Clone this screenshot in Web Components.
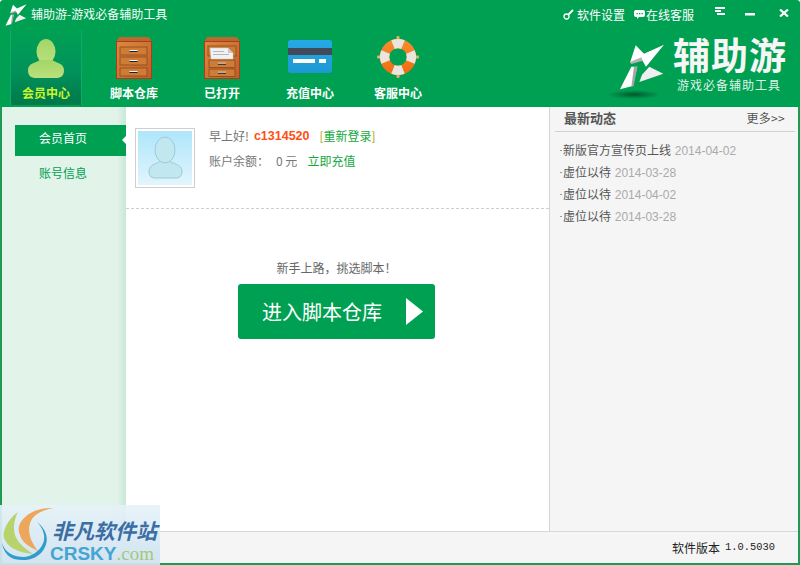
<!DOCTYPE html>
<html lang="zh"><head><meta charset="utf-8"><title>辅助游</title>
<style>
html,body{margin:0;padding:0;width:800px;height:565px;overflow:hidden;background:#fff}
body{font-family:"Noto Sans CJK SC","Liberation Sans",sans-serif;font-size:12px}
</style></head><body>
<app-window>
  <app-header slot="header">
    <nav-tab active label="会员中心" icon="user" top="9"></nav-tab>
    <nav-tab label="脚本仓库" icon="drawer" top="7"></nav-tab>
    <nav-tab label="已打开" icon="open" top="7"></nav-tab>
    <nav-tab label="充值中心" icon="card" top="10"></nav-tab>
    <nav-tab label="客服中心" icon="ring" top="6"></nav-tab>
  </app-header>
  <side-menu slot="side">
    <menu-item active>会员首页</menu-item>
    <menu-item>账号信息</menu-item>
  </side-menu>
  <member-pane slot="main"></member-pane>
  <news-panel slot="news">
    <news-row date="2014-04-02">新版官方宣传页上线</news-row>
    <news-row date="2014-03-28">虚位以待</news-row>
    <news-row date="2014-04-02">虚位以待</news-row>
    <news-row date="2014-03-28">虚位以待</news-row>
  </news-panel>
  <status-bar slot="status"></status-bar>
</app-window>
<site-stamp></site-stamp>
<script>
const LOGO = (w,h)=>`<svg width="${w}" height="${h}" viewBox="26 16 136 138"><path d="M75 20 L100 45 L160 18 L106 84 L92 60 L58 72Z" fill="#fff"/><path d="M58 70 L92 56 L96 66 L62 76Z" fill="#b5b5b5"/><path d="M62 84 L80 84 L66 142 L28 152Z" fill="#fff"/><path d="M70 84 L80 84 L69 142 L62 144Z" fill="#a5a5a5"/><path d="M116 84 L158 105 L86 130 L94 108Z" fill="#efefef"/></svg>`;
const cab = inner=>`<svg width="36" height="42" viewBox="0 0 36 42"><defs><linearGradient id="w" x1="0" y1="0" x2="1" y2="1"><stop offset="0" stop-color="#dc8a3e"/><stop offset="1" stop-color="#bb5f28"/></linearGradient></defs><path d="M3 0 H33 L36 5 H0Z" fill="#b9682f"/><rect x=".5" y="4.500" width="35" height="37" fill="url(#w)" stroke="#b23a1c"/>${inner}</svg>`;
const dr = (x,y,w,h)=>`<rect x="${x}" y="${y}" width="${w}" height="${h}" fill="#cf7c36" stroke="#8a4a1e" stroke-width=".8"/><rect x="${x+w/2-4}" y="${y+h/2-1}" width="8" height="1" fill="#f5f5f5"/><rect x="${x+w/2-4}" y="${y+h/2}" width="8" height="1" fill="#222"/>`;
const ICONS = {
 user:`<svg width="36" height="39" viewBox="0 0 36 39"><defs><linearGradient id="u" x1="0" y1="0" x2="0" y2="1"><stop offset="0" stop-color="#a2d668"/><stop offset="1" stop-color="#bbe07c"/></linearGradient></defs><ellipse cx="18" cy="12.500" rx="9.500" ry="12.500" fill="url(#u)"/><path d="M0 31 C0 24 8 24 12 21 L24 21 C28 24 36 24 36 31 C36 37 33 39 28 39 L8 39 C3 39 0 37 0 31Z" fill="url(#u)"/></svg>`,
 drawer:cab(dr(4,10,27,8)+dr(4,20,27,8)+dr(4,31,27,8)),
 open:cab(`<rect x="4" y="9" width="28" height="10" fill="#cf7c36" stroke="#8a4a1e" stroke-width=".8"/>`+dr(5,23,26,7.500)+dr(5,32,26,7.500)+`<path d="M6 11 H24 L29 16 V22 H7Z" fill="#f1f1f1" stroke="#c9c9c9" stroke-width=".5"/><path d="M24 11 L29 16 H24Z" fill="#c8c8c8"/><g fill="#aaa"><rect x="9" y="14" width="11" height=".8"/><rect x="9" y="17" width="16" height=".8"/></g>`),
 card:`<svg width="44" height="33" viewBox="0 0 44 33"><defs><linearGradient id="c" x1="0" y1="0" x2="0" y2="1"><stop offset="0" stop-color="#25a9e6"/><stop offset="1" stop-color="#1e98d2"/></linearGradient></defs><rect width="44" height="33" rx="3" fill="url(#c)"/><rect y="8" width="44" height="7" fill="#404a58"/><rect x="5" y="19" width="22" height="4" fill="#fff"/><rect x="31" y="19" width="7" height="4" fill="#fff"/></svg>`,
 ring:`<svg width="42" height="42" viewBox="0 0 42 42"><defs><linearGradient id="o" x1="0" y1="0" x2="0" y2="1"><stop offset="0" stop-color="#f88a2c"/><stop offset="1" stop-color="#ef6f14"/></linearGradient></defs><g fill="#e6b25f"><rect x="19.500" y="0" width="3" height="4" rx="1"/><rect x="19.500" y="38" width="3" height="4" rx="1"/><rect x="0" y="19.500" width="4" height="3" rx="1"/><rect x="38" y="19.500" width="4" height="3" rx="1"/></g><circle cx="21" cy="21" r="13.400" fill="none" stroke="url(#o)" stroke-width="9.300"/><g fill="none" stroke="#ebe5dd" stroke-width="9.300"><path d="M16 8.570 A13.400 13.400 0 0 1 26 8.570"/><path d="M16 33.430 A13.400 13.400 0 0 0 26 33.430"/><path d="M8.570 16 A13.400 13.400 0 0 0 8.570 26"/><path d="M33.430 16 A13.400 13.400 0 0 1 33.430 26"/></g></svg>`
};
function def(name, css, html){
  customElements.define(name, class extends HTMLElement{
    connectedCallback(){
      if(this.shadowRoot) return;
      const r=this.attachShadow({mode:"open"});
      r.innerHTML=`<style>${css}</style>`+(typeof html==="function"?html(this):html);
    }
  });
}
def("app-window",`
 :host{display:flex;flex-direction:column;width:800px;height:565px;box-sizing:border-box;border:solid #1f9a55;border-width:0 2px 2px 2px;border-radius:4px 4px 0 0;background:#fff}
 .body{flex:1;display:flex;min-height:0}
 ::slotted([slot=news]){flex:1}
`,`<slot name="header"></slot><div class="body"><slot name="side"></slot><slot name="main"></slot><slot name="news"></slot></div><slot name="status"></slot>`);
def("app-header",`
 :host{display:flex;height:107px;margin:0 -2px;background:#00a053;color:#fff;border-radius:4px 4px 0 0;flex:none}
 .l{flex:1;display:flex;flex-direction:column;padding-left:5px}
 .title{height:30px;display:flex;align-items:flex-start;gap:4px;padding-top:4px;box-sizing:border-box;line-height:20px}
 .title span{font-size:12px;color:#f4fff8}
 .tabs{display:flex;gap:16px;padding-left:5px;flex:1}
 .r{width:240px;display:flex;flex-direction:column;flex:none}
 .ctl{display:flex;align-items:center;height:28px;font-size:12px;color:#fff}
 .ctl .a{display:flex;align-items:center;gap:3px}
 .ctl .a.s{margin-left:3px;width:62px}
 .ctl .a.c{margin-left:9px;width:62px;gap:1px}
 .w{display:flex;margin-left:7px;gap:20px;align-items:center}
 .w svg{display:block}
 .brand{display:flex;gap:9px;padding:16px 0 0 58px;position:relative}
 .big{font:700 37px/36px "Liberation Sans","Noto Sans CJK SC",sans-serif;letter-spacing:1px;color:#f6f6f6;margin:-4px 0 0 -2px;white-space:nowrap}
 .sub{font:12px/14px "Liberation Sans","Noto Sans CJK SC",sans-serif;letter-spacing:1px;color:#dff3e6;margin:3px 0 0 2px;white-space:nowrap}
 .sh{position:absolute;left:47px;top:62px;width:54px;height:9px;border-radius:50%;background:radial-gradient(closest-side,rgba(0,50,25,.65),rgba(0,90,45,0))}
`,()=>`<div class="l"><div class="title">${LOGO(22,22)}<span>辅助游-游戏必备辅助工具</span></div><div class="tabs"><slot></slot></div></div>
<div class="r"><div class="ctl">
<span class="a s"><svg width="11" height="11" viewBox="0 0 11 11"><circle cx="3.500" cy="7.500" r="2.500" fill="none" stroke="#fff" stroke-width="1.300"/><path d="M5.500 5.500 L10 1" stroke="#fff" stroke-width="1.800"/></svg>软件设置</span>
<span class="a c"><svg width="11" height="9" viewBox="0 0 11 9"><path d="M2 0 H9 Q11 0 11 2 V5 Q11 7 9 7 H5 L3 9 V7 H2 Q0 7 0 5 V2 Q0 0 2 0Z" fill="#fff"/><g fill="#00a053"><rect x="2.500" y="3" width="1.300" height="1.300"/><rect x="5" y="3" width="1.300" height="1.300"/><rect x="7.500" y="3" width="1.300" height="1.300"/></g></svg>在线客服</span>
<span class="w" style="margin-left:19px">
<svg style="margin-top:-6px" width="10" height="8" viewBox="0 0 10 8"><g fill="#fff"><rect width="10" height="2" y="0"/><rect width="6" height="2" y="3"/><rect x="2" width="8" height="2" y="6"/></g></svg>
<svg width="10" height="10" viewBox="0 0 10 10"><rect y="4" width="10" height="2.500" fill="#fff"/></svg>
<svg style="margin:-3px 0 0 4px" width="10" height="8" viewBox="0 0 10 8"><path d="M1 .5 L9 7.500 M9 .5 L1 7.500" stroke="#fff" stroke-width="2.200"/></svg>
</span></div>
<div class="brand">${LOGO(48,46)}<div><div class="big">辅助游</div><div class="sub">游戏必备辅助工具</div></div><div class="sh"></div></div></div>`);
def("nav-tab",`
 :host{display:block;width:72px;height:75px;text-align:center;font-weight:700;font-size:12px;color:#fff}
 :host([active]){background:linear-gradient(#00a053 0,#01925a 55%,#00784a 100%);box-shadow:inset 1px 0 0 #0dad68,inset -1px 0 0 #0dad68;color:#c8f52c}
 .i{height:54px;display:flex;align-items:flex-start;justify-content:center;box-sizing:border-box}
 .t{line-height:18px}
`,h=>`<div class="i" style="padding-top:${h.getAttribute("top")}px">${ICONS[h.getAttribute("icon")]}</div><div class="t">${h.getAttribute("label")}</div>`);
def("side-menu",`:host{display:block;width:124px;flex:none;box-sizing:border-box;padding:18px 0 0 13px;background:linear-gradient(90deg,#e2f3ea 0,#e2f3ea 115px,#c8e7d6 124px)}`,`<slot></slot>`);
def("menu-item",`
 :host{display:block;height:31px;line-height:26px;width:111px;padding-left:24px;box-sizing:border-box;font-size:12px;color:#00a053;margin-bottom:4px;position:relative}
 :host([active]){background:#00a053;color:#fff}
 :host([active])::after{content:"";position:absolute;right:0;top:11px;border:4px solid transparent;border-right:4px solid #fff;border-left:0}
`,`<slot></slot>`);
def("member-pane",`
 :host{display:flex;flex-direction:column;width:423px;flex:none;background:#fff;border-right:1px solid #d5d5d5;box-sizing:content-box;font-size:12px}
 .top{border-bottom:1px dashed #cfcfcf;display:flex;padding:21px 0 0 9px;box-sizing:border-box;height:102px;gap:14px}
 .av{width:60px;height:60px;box-sizing:border-box;border:1px solid #cfcfcf;padding:2px;background:#fff;flex:none}
 .av svg{display:block}
 .ln{height:25px;line-height:16px;color:#777;white-space:nowrap;display:flex}
 .id{color:#ff4e12;font:700 12.500px/16px "Liberation Sans",sans-serif;margin:0 10px 0 5px}
 .g{color:#14a83c}
 .cta{flex:1;display:flex;flex-direction:column;align-items:center;padding-top:50px;color:#666}
 .cta p{margin:0 0 8px;line-height:17px;font-size:12px;transform:translateX(-1px)}
 button{width:197px;height:55px;border:0;border-radius:3px;background:#00a053;color:#fff;font:400 20px "Noto Sans CJK SC",sans-serif;display:flex;align-items:center;padding:0 12px 0 24px;justify-content:space-between;transform:translateX(-1px)}
`,`<div class="top"><div class="av"><svg width="54" height="54" viewBox="0 0 54 54"><defs><linearGradient id="b" x1="0" y1="0" x2="0" y2="1"><stop offset="0" stop-color="#aee6fb"/><stop offset="1" stop-color="#e2f5fc"/></linearGradient></defs><rect width="54" height="54" fill="url(#b)"/><g fill="#c2e8ef" stroke="#9ccbd7" stroke-width="1"><path d="M11 40 C11 33 20 33 24 29 L30 29 C34 33 44 33 44 40 C44 46 41 47 37 47 L18 47 C14 47 11 46 11 40Z"/><ellipse cx="27" cy="19" rx="10" ry="13"/></g></svg></div>
<div><div class="ln">早上好!<span class="id">c1314520</span><span class="g"><span style="color:#a9a000">[</span>重新登录<span style="color:#a9a000">]</span></span></div>
<div class="ln">账户余额：<span style="margin:0 10px 0 7px">0 元</span><span class="g">立即充值</span></div></div></div>
<div class="cta"><p>新手上路，挑选脚本！</p><button><span>进入脚本仓库</span><svg width="17" height="27" viewBox="0 0 17 27"><path d="M0 0 L17 13.500 L0 27Z" fill="#fff"/></svg></button></div>`);
def("news-panel",`
 :host{display:block;background:#f5f5f5;font-size:12px;min-width:0}
 .h{display:flex;justify-content:space-between;align-items:center;height:21px;padding:0 10px 3px 9px;margin:0 3px 7px 5px;border-bottom:1px solid #cfd4d2}
 b{color:#555;font-size:13px;font-weight:700}
 .m{color:#555;letter-spacing:.3px}
`,`<div class="h"><b>最新动态</b><span class="m">更多&gt;&gt;</span></div><slot></slot>`);
def("news-row",`
 :host{display:block;height:22px;line-height:22px;padding-left:11px;color:#555;white-space:nowrap;position:relative}
 .d{color:#aaa;margin-left:1px;font-family:"Liberation Sans",sans-serif}
 :host::before{content:"";position:absolute;left:10px;top:11px;width:2px;height:1px;background:#999}
 .s{padding-left:2px}
`,h=>`<span class="s"><slot></slot></span> <span class="d">${h.getAttribute("date")}</span>`);
def("status-bar",`
 :host{display:flex;flex:none;height:32px;justify-content:flex-end;align-items:center;background:#f5f5f5;border-top:1px solid #d8d8d8;padding:0 23px 1px 0;font:12px "Noto Sans CJK SC",sans-serif;color:#222;box-sizing:border-box}
 .v{font-family:"Liberation Mono",monospace;font-size:10.400px;margin-left:5px}
`,`软件版本<span class="v">1.0.5030</span>`);
def("site-stamp",`
 :host{position:absolute;left:0;top:505px;width:160px;height:60px;background:linear-gradient(#e6f2f9e8,#cfe3f0f0);overflow:hidden;display:block}
 svg{position:absolute;left:0;top:0}
 .a{position:absolute;left:52px;top:16px;font:700 21px/22px "Liberation Sans","Noto Sans CJK SC",sans-serif;color:#3b6ea5;white-space:nowrap;font-style:italic}
 .b{position:absolute;left:50px;top:39px;font:700 19px/20px "Liberation Sans",sans-serif;color:#45a5d2;white-space:nowrap}
 .b i{font:400 19px/20px "Liberation Serif",serif;color:#a7c77c;font-style:normal}
`,`<svg width="60" height="60" viewBox="0 0 60 60"><path d="M18 7 C8 14 2 26 4 33 C8 44 22 48 33 49 C22 42 14 34 14 24 C14 16 16 11 18 7Z" fill="#b8d36b"/><path d="M53 3 C30 2 14 18 20 30 C22 38 30 42 38 46 C30 36 26 24 32 14 C36 8 44 5 53 3Z" fill="#eea65b"/><path d="M37 17 C46 24 50 34 44 44 C38 54 26 57 14 54 C8 52 3 46 2 38 C5 48 14 52 24 52 C36 51 46 40 44 30 C43 24 40 20 37 17Z" fill="#2f9ccb"/></svg><div class="a">非凡软件站</div><div class="b">CRSKY<i>.com</i></div>`);
</script></body></html>
